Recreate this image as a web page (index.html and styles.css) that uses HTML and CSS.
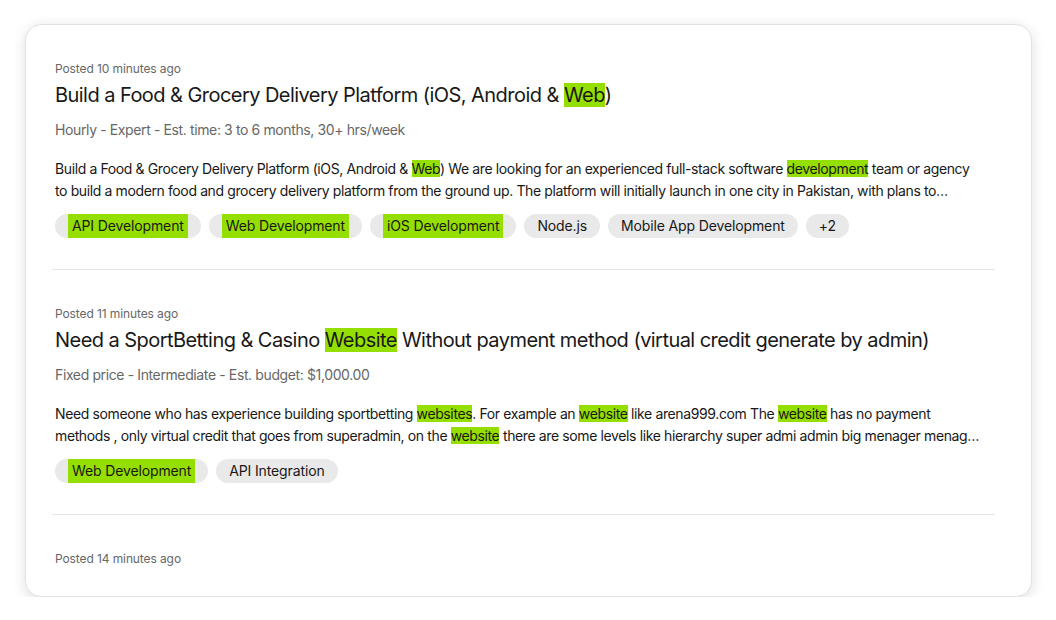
FILE: index.html
```html
<!DOCTYPE html>
<html lang="en">
<head>
<meta charset="utf-8">
<title>Jobs</title>
<link rel="stylesheet" href="styles.css">
</head>
<body>
<div class="card">
  <div class="list">
    <section class="job">
      <div class="posted">Posted 10 minutes ago</div>
      <h2 class="title">Build a Food &amp; Grocery Delivery Platform (iOS, Android &amp; <mark>Web</mark>)</h2>
      <div class="meta">Hourly - Expert - Est. time: 3 to 6 months, 30+ hrs/week</div>
      <p class="desc">Build a Food &amp; Grocery Delivery Platform (iOS, Android &amp; <mark>Web</mark>) We are looking for an experienced full-stack software <mark>development</mark> team or agency to build a modern food and grocery delivery platform from the ground up. The platform will initially launch in one city in Pakistan, with plans to expand to multiple cities and regions across the country in the near future.</p>
      <div class="tags">
        <span class="tag"><mark class="tm">API Development</mark></span>
        <span class="tag"><mark class="tm">Web Development</mark></span>
        <span class="tag"><mark class="tm">iOS Development</mark></span>
        <span class="tag">Node.js</span>
        <span class="tag">Mobile App Development</span>
        <span class="tag">+2</span>
      </div>
    </section>
    <section class="job">
      <div class="posted">Posted 11 minutes ago</div>
      <h2 class="title">Need a SportBetting &amp; Casino <mark>Website</mark> Without payment method (virtual credit generate by admin)</h2>
      <div class="meta">Fixed price - Intermediate - Est. budget: $1,000.00</div>
      <p class="desc">Need someone who has experience building sportbetting <mark>websites</mark>. For example an <mark>website</mark> like arena999.com The <mark>website</mark> has no payment methods , only virtual credit that goes from superadmin, on the <mark>website</mark> there are some levels like hierarchy super admi admin big menager menager agent and player accounts with credit.</p>
      <div class="tags">
        <span class="tag"><mark class="tm">Web Development</mark></span>
        <span class="tag">API Integration</span>
      </div>
    </section>
    <section class="job last">
      <div class="posted">Posted 14 minutes ago</div>
    </section>
  </div>
</div>
</body>
</html>
```
FILE: styles.css
```css
* { box-sizing: border-box; }
html, body { margin: 0; padding: 0; background: #ffffff; }
body {
  font-family: Inter, "Noto Sans", "Liberation Sans", sans-serif;
  color: #181818;
  padding: 24px 24px 0 25px;
}
.card {
  width: 1007px;
  height: 573px;
  border: 1px solid #e2e2e2;
  border-radius: 16px;
  background: #fff;
  box-shadow: 0 3px 14px rgba(0, 0, 0, 0.13);
  overflow: hidden;
}
.list {
  margin: 0 36px 0 26px;
}
.job {
  padding: 36px 0 31px 3px;
  border-bottom: 1px solid #e6e6e6;
}
.job.last { border-bottom: none; }
.posted {
  font-size: 12px;
  line-height: 16px;
  color: #676767;
  letter-spacing: -0.1px;
}
.title {
  margin: 4px 0 0;
  font-size: 20px;
  line-height: 28px;
  font-weight: 400;
  color: #181818;
  letter-spacing: -0.55px;
}
.meta {
  margin-top: 11px;
  font-size: 14px;
  line-height: 20px;
  color: #676767;
  letter-spacing: -0.38px;
}
.desc {
  margin: 18px 0 0;
  font-size: 14px;
  line-height: 22px;
  color: #181818;
  letter-spacing: -0.38px;
  max-width: 926px;
  display: -webkit-box;
  -webkit-line-clamp: 2;
  -webkit-box-orient: vertical;
  overflow: hidden;
}
mark {
  background: #95df00;
  color: inherit;
}
.tags {
  margin-top: 12px;
  display: flex;
  flex-wrap: wrap;
  gap: 8px;
}
.tag {
  display: inline-flex;
  align-items: center;
  height: 24px;
  padding: 0 13px;
  border-radius: 12px;
  background: #e9e9e9;
  font-size: 14px;
  line-height: 24px;
  color: #181818;
  letter-spacing: -0.13px;
}
.tm {
  display: inline-block;
  padding: 0 4px;
  line-height: 24px;
}
```
